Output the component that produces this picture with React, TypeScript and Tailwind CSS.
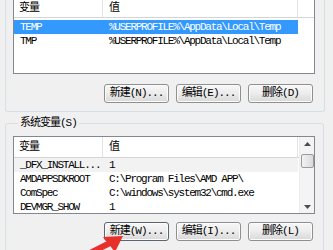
import type { ReactNode } from 'react'

const font = { fontFamily: '"Liberation Mono", "Noto Sans CJK SC", monospace' }

function WinButton({ children, focused }: { children: ReactNode; focused?: boolean }) {
  return (
    <button
      className={
        'w-[65px] h-[19px] rounded-[3px] border text-[11px] leading-none tracking-[-1px] text-black flex items-center justify-center bg-gradient-to-b from-[#f7f7f7] via-[#ececec] to-[#d8d8d8] shadow-[inset_0_0_0_1px_#fcfcfc] ' +
        (focused ? 'border-[#5a6570]' : 'border-[#8e8f8f]')
      }
    >
      {children}
    </button>
  )
}

function Header({ tall }: { tall?: boolean }) {
  return (
    <div
      className={
        'flex shrink-0 border-b border-[#d5d5d5] bg-white text-[11px] tracking-[-1px] ' +
        (tall ? 'h-[21px]' : 'h-[19px]')
      }
    >
      <div className="w-[89px] border-r border-[#e3e3e3] flex items-center pl-[5px]">变量</div>
      <div className="w-[195px] border-r border-[#e3e3e3] flex items-center pl-[6px]">值</div>
      <div className="flex-1" />
    </div>
  )
}

function Row({ name, value, selected, hover }: { name: string; value: string; selected?: boolean; hover?: boolean }) {
  return (
    <div
      className={
        'flex h-[14px] w-[284px] shrink-0 items-center text-[11px] tracking-[-1.25px] whitespace-nowrap ' +
        (selected ? 'bg-[#3399ff] text-white' : hover ? 'bg-[#f2f2f2] text-black' : 'text-black')
      }
    >
      <div className="w-[89px] pl-[6px] overflow-hidden">{name}</div>
      <div className="flex-1 pl-[6px] overflow-hidden">{value}</div>
    </div>
  )
}

function ScrollBar() {
  return (
    <div className="w-[15px] shrink-0 bg-[#f4f4f4] border-l border-[#ececec] flex flex-col items-center">
      <div className="h-[13px] w-full flex items-center justify-center">
        <svg width="7" height="4" viewBox="0 0 7 4">
          <path d="M0 4 L3.5 0 L7 4 Z" fill="#4d4d4d" />
        </svg>
      </div>
      <div className="mt-[4px] h-[14px] w-[13px] rounded-[2px] border border-[#9a9a9a] bg-gradient-to-r from-[#f2f2f2] to-[#d9d9d9]" />
      <div className="flex-1" />
      <div className="h-[13px] w-full flex items-center justify-center">
        <svg width="7" height="4" viewBox="0 0 7 4">
          <path d="M0 0 L7 0 L3.5 4 Z" fill="#4d4d4d" />
        </svg>
      </div>
    </div>
  )
}

export default function App() {
  return (
    <div className="relative w-[333px] h-[250px] overflow-hidden bg-[#f0f0f0] text-black flex flex-col" style={font}>
      <div className="-mt-[6px] ml-[5px] mr-[8px] h-[118px] shrink-0 border border-t-0 border-[#d5dfe5] rounded-b-[3px] pt-[4px] pl-[7px] pr-[9px]">
        <div className="h-[76px] border border-[#828790] bg-white flex flex-col overflow-hidden">
          <Header />
          <div className="h-[2px] shrink-0" />
          <Row name="TEMP" value="%USERPROFILE%\AppData\Local\Temp" selected />
          <Row name="TMP" value="%USERPROFILE%\AppData\Local\Temp" />
        </div>
        <div className="mt-[10px] mr-[2px] flex justify-end gap-[7px]">
          <WinButton>新建(N)...</WinButton>
          <WinButton>编辑(E)...</WinButton>
          <WinButton>删除(D)</WinButton>
        </div>
      </div>

      <fieldset className="mt-[4px] ml-[5px] mr-[9px] h-[160px] shrink-0 border border-[#d5dfe5] rounded-[3px] pl-[7px] pr-[8px]">
        <legend className="ml-[5px] px-[2px] text-[11px] leading-[14px] tracking-[-1px]">系统变量(S)</legend>
        <div className="mt-[6px] h-[78px] border border-[#828790] bg-white flex overflow-hidden">
          <div className="flex-1 flex flex-col overflow-hidden">
            <Header tall />
            <Row name="_DFX_INSTALL..." value="1" hover />
            <Row name="AMDAPPSDKROOT" value="C:\Program Files\AMD APP\" />
            <Row name="ComSpec" value="C:\windows\system32\cmd.exe" />
            <Row name="DEVMGR_SHOW" value="1" />
          </div>
          <ScrollBar />
        </div>
        <div className="mt-[8px] mr-[2px] flex justify-end gap-[7px]">
          <WinButton focused>新建(W)...</WinButton>
          <WinButton>编辑(I)...</WinButton>
          <WinButton>删除(L)</WinButton>
        </div>
      </fieldset>

      <svg className="absolute left-0 top-0 pointer-events-none" width="333" height="250" viewBox="0 0 333 250">
        <line x1="80" y1="258" x2="110" y2="243" stroke="#e8302a" strokeWidth="6" strokeLinecap="round" />
        <polygon points="123,236 103,237 115,252" fill="#e8302a" />
      </svg>
    </div>
  )
}
